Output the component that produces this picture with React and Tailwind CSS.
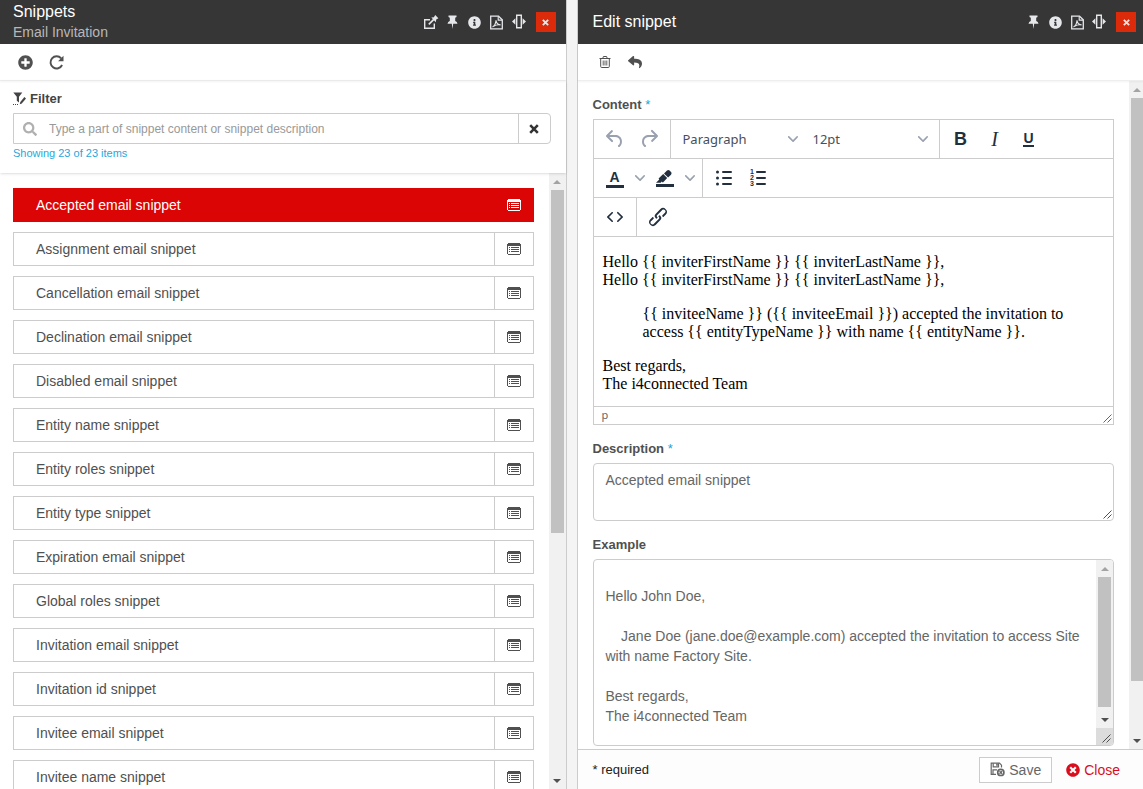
import React, { useState } from "react";
import {
  FaInfoCircle,
  FaPlusCircle,
  FaReply,
  FaSearch,
  FaTimesCircle,
} from "react-icons/fa";

const snippets = [
  "Accepted email snippet",
  "Assignment email snippet",
  "Cancellation email snippet",
  "Declination email snippet",
  "Disabled email snippet",
  "Entity name snippet",
  "Entity roles snippet",
  "Entity type snippet",
  "Expiration email snippet",
  "Global roles snippet",
  "Invitation email snippet",
  "Invitation id snippet",
  "Invitee email snippet",
  "Invitee name snippet",
];

const exampleText = `
Hello John Doe,

    Jane Doe (jane.doe@example.com) accepted the invitation to access Site with name Factory Site.

Best regards,
The i4connected Team`;

const OpenIcon = () => (
  <svg width="16" height="16" viewBox="0 0 16 16" fill="none" stroke="currentColor">
    <path d="M7 5.7H1.7v8.6h9.6V9.5" strokeWidth="1.4" />
    <path d="M5.8 10.4l5-5" strokeWidth="1.6" />
    <path d="M8.3 3.6l2.6-.4 1.3-2.2 3.2 3.2-2.2 1.3-.4 2.8z" fill="currentColor" stroke="none" />
  </svg>
);

const PinIcon = () => (
  <svg width="11" height="14" viewBox="0 0 11 14" fill="currentColor">
    <path d="M1.5.5h8v1.6L8.2 2.8v3.1q2 .8 2.3 2.8H6.2L5.5 14l-.7-5.3H.5q.3-2 2.3-2.8V2.8L1.5 2.1z" />
  </svg>
);

const PdfIcon = () => (
  <svg width="13" height="15" viewBox="0 0 13 15" fill="none" stroke="currentColor">
    <path d="M.7 1.2h7.8l3.8 3.6v9H.7z" strokeWidth="1.3" />
    <path d="M8.2 1.4v3.7h4" strokeWidth="1.1" />
    <path d="M2.5 12c2-1 3.3-3.8 3.5-6.7.4 2.8 1.8 4.3 4.6 4.6-2.6-.4-5 .1-7 1.4" strokeWidth="1.1" />
  </svg>
);

const WidthIcon = () => (
  <svg width="14" height="16" viewBox="0 0 14 16" fill="currentColor">
    <path d="M4.7 1.2h4.6v12.6H4.7z" fill="none" stroke="currentColor" strokeWidth="1.4" />
    <path d="M3.4 4.2v6.6L0 7.5zM10.6 4.2v6.6L14 7.5z" />
  </svg>
);

const CrossIcon = ({ size }) => (
  <svg width={size} height={size} viewBox="0 0 10 10" fill="none" stroke="currentColor" strokeWidth="2.6">
    <path d="M1.2 1.2l7.6 7.6M8.8 1.2L1.2 8.8" />
  </svg>
);

const RefreshIcon = () => (
  <svg width="15" height="15" viewBox="0 0 15 15" fill="none" stroke="currentColor">
    <path d="M12.2 3.3A6.1 6.1 0 1 0 13.1 10" strokeWidth="1.9" />
    <path d="M14.5.8v5.4H9.1z" fill="currentColor" stroke="none" />
  </svg>
);

const TrashIcon = () => (
  <svg width="14" height="14" viewBox="0 0 14 14" fill="none" stroke="currentColor">
    <path d="M1.5 3.5h11M4.8 3.3l.6-1.8h3.2l.6 1.8M2.7 3.7v7.8q0 1 1 1h6.6q1 0 1-1V3.7" />
    <path d="M5.2 5.5v5M7 5.5v5M8.8 5.5v5" strokeWidth=".9" />
  </svg>
);

const FilterIcon = () => (
  <svg width="13" height="14" viewBox="0 0 13 14" fill="currentColor">
    <path d="M.3.5h9L6 4.8v5.6L3.8 8.8v-4z" />
    <path d="M11.4 5l1.6 1.4-4.2 5-2 .8.5-2.1z" />
    <path d="M0 12.5h5" stroke="currentColor" strokeDasharray="1 1" />
  </svg>
);

const ListAltIcon = () => (
  <svg width="14" height="12" viewBox="0 0 14 12" fill="currentColor" shapeRendering="crispEdges">
    <path d="M0 1h1V0h12v1h1v10h-1v1H1v-1H0zM1 3v8h12V3z" fillRule="evenodd" />
    <path d="M2 4h1v1H2zM4 4h8v1H4zM2 6h1v1H2zM4 6h8v1H4zM2 8h1v1H2zM4 8h8v1H4z" />
  </svg>
);

const SaveIcon = () => (
  <svg width="15" height="15" viewBox="0 0 15 15" fill="none" stroke="currentColor">
    <path d="M6 12.3H1.2V1.2h8.3l2 2v2.3" strokeWidth="1.2" />
    <path d="M3.2 1.2v3.6h5.3V1.2M3 12V7.8h4" strokeWidth="1.2" />
    <path d="M6.2 1.4h1.6v2.4H6.2z" fill="currentColor" stroke="none" />
    <circle cx="10.8" cy="10.4" r="3.1" strokeWidth="1.7" />
    <path d="M9.5 9.1l2.6 2.6M12.1 9.1l-2.6 2.6" strokeWidth="1.3" />
  </svg>
);

const Grip = ({ className }) => (
  <svg width="9" height="9" viewBox="0 0 9 9" fill="none" stroke="currentColor" className={className}>
    <path d="M.5 8.5l8-8M4.5 8.5l4-4" />
  </svg>
);

const Chevron = () => (
  <svg width="10" height="10" viewBox="0 0 10 10" fill="currentColor">
    <path d="M8.7 2.2c.3-.3.8-.3 1 0 .4.4.4.9 0 1.2L5.7 7.8c-.3.3-.9.3-1.2 0L.2 3.4a.8.8 0 0 1 0-1.2c.3-.3.8-.3 1.1 0L5 6l3.7-3.8Z" />
  </svg>
);

const EditorIcon = ({ d }) => (
  <svg width="24" height="24" viewBox="0 0 24 24" fill="currentColor">
    <path d={d} />
  </svg>
);

const undoPath =
  "M6.4 8H12c3.7 0 6.2 2 6.8 5.1.6 2.7-.4 5.6-2.3 6.8a1 1 0 0 1-1-1.8c1.1-.6 1.8-2.7 1.4-4.6-.5-2.1-2.1-3.5-4.9-3.5H6.4l3.3 3.3a1 1 0 1 1-1.4 1.4l-5-5a1 1 0 0 1 0-1.4l5-5a1 1 0 0 1 1.4 1.4L6.4 8Z";
const redoPath =
  "M17.6 10H12c-2.8 0-4.4 1.4-4.9 3.5-.4 2 .3 4 1.4 4.6a1 1 0 1 1-1 1.8c-2-1.2-2.9-4.1-2.3-6.8.6-3 3-5.1 6.8-5.1h5.6l-3.3-3.3a1 1 0 1 1 1.4-1.4l5 5a1 1 0 0 1 0 1.4l-5 5a1 1 0 0 1-1.4-1.4l3.3-3.3Z";
const highlightPath =
  "M3 18h18v3H3zM7.7 16.7H3l3.3-3.3-.7-.8L10.2 8l4 4.1-4 4.2c-.2.2-.6.2-.8 0l-.6-.7-1.1 1.1zm5-7.5L11 7.4l3-2.9a2 2 0 0 1 2.6 0L18 6c.7.7.7 2 0 2.7l-2.9 2.9-1.8-1.8-.5-.6";
const codePath =
  "M9.8 15.7c.3.3.3.8 0 1-.3.4-.9.4-1.2 0l-4.4-4.1a.8.8 0 0 1 0-1.2l4.4-4.2c.3-.3.9-.3 1.2 0 .3.3.3.8 0 1.1L6 12l3.8 3.7ZM14.2 15.7c-.3.3-.3.8 0 1 .4.4.9.4 1.2 0l4.4-4.1c.3-.3.3-.9 0-1.2l-4.4-4.2a.8.8 0 0 0-1.2 0c-.3.3-.3.8 0 1.1L18 12l-3.8 3.7Z";
const linkPath =
  "M6.2 12.3a1 1 0 0 1 1.4 1.4l-2 2a2 2 0 1 0 2.6 2.8l4.8-4.8a1 1 0 0 0 0-1.4 1 1 0 1 1 1.4-1.3 2.9 2.9 0 0 1 0 4L9.6 20a3.9 3.9 0 0 1-5.5-5.5l2-2Zm11.6-.6a1 1 0 0 1-1.4-1.4l2-2a2 2 0 1 0-2.6-2.8L11 10.3a1 1 0 0 0 0 1.4A1 1 0 1 1 9.6 13a2.9 2.9 0 0 1 0-4L14.4 4a3.9 3.9 0 0 1 5.5 5.5l-2 2Z";

const BulletListIcon = () => (
  <svg width="24" height="24" viewBox="0 0 24 24" fill="currentColor">
    <circle cx="5.5" cy="6" r="1.5" />
    <circle cx="5.5" cy="12" r="1.5" />
    <circle cx="5.5" cy="18" r="1.5" />
    <path d="M11 6h8M11 12h8M11 18h8" stroke="currentColor" strokeWidth="2" strokeLinecap="round" />
  </svg>
);

const NumberListIcon = () => (
  <svg width="24" height="24" viewBox="0 0 24 24" fill="currentColor">
    <text x="4" y="8" className="font-bold text-[7px]">1</text>
    <text x="4" y="14" className="font-bold text-[7px]">2</text>
    <text x="4" y="20" className="font-bold text-[7px]">3</text>
    <path d="M11 6h8M11 12h8M11 18h8" stroke="currentColor" strokeWidth="2" strokeLinecap="round" />
  </svg>
);

const HeaderButton = ({ label, children }) => (
  <button type="button" aria-label={label} className="flex w-[22px] justify-center text-gray-200">
    {children}
  </button>
);

const PanelHeader = ({ title, subtitle, className, canOpen }) => (
  <header className={`flex h-11 shrink-0 items-center justify-between bg-[#363636] ${className}`}>
    <div>
      <h1 className="text-base leading-5 text-white">{title}</h1>
      {subtitle && <p className="text-sm leading-5 text-[#b8b8b8]">{subtitle}</p>}
    </div>
    <div className="flex items-center">
      {canOpen && (
        <HeaderButton label="Open">
          <OpenIcon />
        </HeaderButton>
      )}
      <HeaderButton label="Pin">
        <PinIcon />
      </HeaderButton>
      <HeaderButton label="Info">
        <FaInfoCircle size={13} />
      </HeaderButton>
      <HeaderButton label="Export to PDF">
        <PdfIcon />
      </HeaderButton>
      <HeaderButton label="Resize">
        <WidthIcon />
      </HeaderButton>
      <button
        type="button"
        aria-label="Close panel"
        className="ml-1.5 flex size-5 items-center justify-center bg-[#dc2b0b] text-gray-200"
      >
        <CrossIcon size={7} />
      </button>
    </div>
  </header>
);

const ToolbarButton = ({ label, disabled, className = "w-[34px]", children }) => (
  <button
    type="button"
    aria-label={label}
    disabled={disabled}
    className={`flex h-[34px] items-center justify-center text-[#222f3e] disabled:text-gray-400 ${className}`}
  >
    {children}
  </button>
);

const Scrollbar = ({ className = "w-[17px] px-0.5", thumb }) => (
  <div aria-hidden="true" className={`flex shrink-0 flex-col bg-[#f1f1f1] ${className}`}>
    <div className="flex h-[17px] shrink-0 items-center justify-center">
      <span className="border-x-4 border-b-4 border-x-transparent border-b-[#a3a3a3]" />
    </div>
    <div className="min-h-0 flex-1">
      <div className={`bg-[#c1c1c1] ${thumb}`} />
    </div>
    <div className="flex h-[17px] shrink-0 items-center justify-center">
      <span className="border-x-4 border-t-4 border-x-transparent border-t-[#505050]" />
    </div>
  </div>
);

const SnippetsPanel = () => {
  const [selected, setSelected] = useState(0);
  const [filter, setFilter] = useState("");

  return (
    <section className="flex min-w-0 flex-1 flex-col bg-white">
      <PanelHeader title="Snippets" subtitle="Email Invitation" className="pr-2.5 pl-[13px]" canOpen />
      <div className="flex h-[37px] shrink-0 items-center gap-4 border-b border-[#eee] px-[18px] text-[#505050] shadow-xs">
        <button type="button" aria-label="Add snippet">
          <FaPlusCircle size={15} />
        </button>
        <button type="button" aria-label="Refresh">
          <RefreshIcon />
        </button>
      </div>
      <div className="z-10 shrink-0 px-[13px] pt-2 pb-3 shadow">
        <label htmlFor="filter" className="flex items-center gap-1 text-[13px] leading-5 font-bold text-[#444]">
          <FilterIcon />
          Filter
        </label>
        <div className="mt-1 mr-0.5 flex h-[31px] rounded-r-sm border border-[#ccc]">
          <div className="flex flex-1 items-center gap-3 pl-[9px]">
            <FaSearch size={14} className="text-[#b0b0b0]" />
            <input
              id="filter"
              type="text"
              value={filter}
              onChange={(e) => setFilter(e.target.value)}
              placeholder="Type a part of snippet content or snippet description"
              className="flex-1 text-xs text-[#444] outline-none placeholder:text-[#999]"
            />
          </div>
          <button
            type="button"
            aria-label="Clear filter"
            onClick={() => setFilter("")}
            className="flex w-8 items-center justify-center border-l border-[#ccc] text-[#333]"
          >
            <CrossIcon size={10} />
          </button>
        </div>
        <p className="mt-px text-[11px] leading-4 font-medium text-[#1fa8dc]">Showing 23 of 23 items</p>
      </div>
      <div className="flex min-h-0 flex-1">
        <ul className="flex min-w-0 flex-1 flex-col gap-2.5 overflow-hidden pt-[15px] pr-[15px] pl-[13px]">
          {snippets.map((name, i) => (
            <li
              key={name}
              className={`flex h-[34px] shrink-0 border ${
                selected === i ? "border-[#dc0505] bg-[#dc0505] text-white" : "border-[#ccc] text-[#505050]"
              }`}
            >
              <button
                type="button"
                onClick={() => setSelected(i)}
                className={`flex-1 pl-[22px] text-left text-sm ${selected === i ? "font-medium" : ""}`}
              >
                {name}
              </button>
              <button
                type="button"
                aria-label={`Details of ${name}`}
                className={`flex w-[39px] items-center justify-center border-l ${
                  selected === i ? "border-[#dc0505]" : "border-[#ccc]"
                }`}
              >
                <ListAltIcon />
              </button>
            </li>
          ))}
        </ul>
        <Scrollbar thumb="h-[59%]" />
      </div>
    </section>
  );
};

const Editor = () => (
  <div className="border border-[#ccc]">
    <div className="flex h-[39px] border-b border-[#ccc]">
      <div className="flex items-center border-r border-[#ccc] px-1">
        <ToolbarButton label="Undo" disabled>
          <EditorIcon d={undoPath} />
        </ToolbarButton>
        <ToolbarButton label="Redo" disabled>
          <EditorIcon d={redoPath} />
        </ToolbarButton>
      </div>
      <div className="flex items-center border-r border-[#ccc] px-1 font-['Noto_Sans',sans-serif] text-[13px] text-[#46505c]">
        <div className="grid w-[130px] items-center">
          <select aria-label="Block format" className="col-start-1 row-start-1 h-9 appearance-none pt-0.5 pl-2">
            <option>Paragraph</option>
          </select>
          <span className="pointer-events-none col-start-1 row-start-1 mr-[7px] justify-self-end text-gray-400">
            <Chevron />
          </span>
        </div>
        <div className="grid w-[130px] items-center">
          <select aria-label="Font size" className="col-start-1 row-start-1 h-9 appearance-none pt-0.5 pl-2">
            <option>12pt</option>
          </select>
          <span className="pointer-events-none col-start-1 row-start-1 mr-[7px] justify-self-end text-gray-400">
            <Chevron />
          </span>
        </div>
      </div>
      <div className="flex items-center px-1">
        <ToolbarButton label="Bold">
          <span className="text-lg font-bold">B</span>
        </ToolbarButton>
        <ToolbarButton label="Italic">
          <span className="font-['Liberation_Serif',serif] text-xl italic">I</span>
        </ToolbarButton>
        <ToolbarButton label="Underline">
          <span className="border-b-2 text-sm leading-[13px] font-bold">U</span>
        </ToolbarButton>
      </div>
    </div>
    <div className="flex h-[39px] border-b border-[#ccc]">
      <div className="flex items-center border-r border-[#ccc] px-1">
        <ToolbarButton label="Text color">
          <span className="mt-0.5 w-[18px] border-b-3 text-sm leading-[15px] font-bold">A</span>
        </ToolbarButton>
        <ToolbarButton label="Text color options" className="w-4 text-gray-400">
          <Chevron />
        </ToolbarButton>
        <ToolbarButton label="Background color">
          <EditorIcon d={highlightPath} />
        </ToolbarButton>
        <ToolbarButton label="Background color options" className="w-4 text-gray-400">
          <Chevron />
        </ToolbarButton>
      </div>
      <div className="flex items-center px-1">
        <ToolbarButton label="Bullet list">
          <BulletListIcon />
        </ToolbarButton>
        <ToolbarButton label="Numbered list">
          <NumberListIcon />
        </ToolbarButton>
      </div>
    </div>
    <div className="flex h-[39px] border-b border-[#ccc]">
      <div className="flex items-center border-r border-[#ccc] px-1">
        <ToolbarButton label="Source code">
          <EditorIcon d={codePath} />
        </ToolbarButton>
      </div>
      <div className="flex items-center px-1">
        <ToolbarButton label="Insert link">
          <EditorIcon d={linkPath} />
        </ToolbarButton>
      </div>
    </div>
    <div
      role="textbox"
      aria-multiline="true"
      aria-labelledby="content-label"
      contentEditable
      suppressContentEditableWarning
      className="px-[9px] pt-4 pb-[13px] font-['Liberation_Serif',serif] text-base leading-[18px] text-black outline-none"
    >
      <p>
        {"Hello {{ inviterFirstName }} {{ inviterLastName }},"}
        <br />
        {"Hello {{ inviterFirstName }} {{ inviterLastName }},"}
      </p>
      <p className="my-4 px-10">
        {"{{ inviteeName }} ({{ inviteeEmail }}) accepted the invitation to access {{ entityTypeName }} with name {{ entityName }}."}
      </p>
      <p>
        Best regards,
        <br />
        The i4connected Team
      </p>
    </div>
    <div className="flex h-[18px] items-end justify-between border-t border-[#ccc] pr-px pb-px pl-2 text-[#666]">
      <span className="font-['Noto_Sans',sans-serif] text-[11px] leading-4">p</span>
      <Grip />
    </div>
  </div>
);

const EditPanel = () => {
  const [description, setDescription] = useState("Accepted email snippet");

  return (
    <section className="flex min-w-0 flex-1 flex-col bg-white">
      <PanelHeader title="Edit snippet" className="pr-[7px] pl-[15px]" />
      <div className="z-10 flex h-[37px] shrink-0 items-center gap-4 border-b border-[#eee] px-5 text-[#505050] shadow-xs">
        <button type="button" aria-label="Delete">
          <TrashIcon />
        </button>
        <button type="button" aria-label="Revert">
          <FaReply size={14} />
        </button>
      </div>
      <div className="flex min-h-0 flex-1">
        <form id="snippet-form" className="min-w-0 flex-1 overflow-hidden px-[15px] pt-3.5">
          <div id="content-label" className="mb-1 text-[13px] leading-5 font-bold text-[#505050]">
            Content <span className="font-normal text-[#2a9fd0]">*</span>
          </div>
          <Editor />
          <label htmlFor="description" className="mt-3.5 mb-1 block text-[13px] leading-5 font-bold text-[#505050]">
            Description <span className="font-normal text-[#2a9fd0]">*</span>
          </label>
          <div className="grid">
            <textarea
              id="description"
              value={description}
              onChange={(e) => setDescription(e.target.value)}
              className="col-start-1 row-start-1 h-[58px] resize-none rounded border border-[#ccc] px-3 py-1.5 text-sm leading-5 text-[#666]"
            />
            <Grip className="pointer-events-none col-start-1 row-start-1 mr-0.5 mb-0.5 self-end justify-self-end text-[#505050]" />
          </div>
          <label htmlFor="example" className="mt-3.5 mb-1 block text-[13px] leading-5 font-bold text-[#505050]">
            Example
          </label>
          <div className="flex h-[187px] overflow-hidden rounded border border-[#ccc]">
            <textarea
              id="example"
              readOnly
              value={exampleText}
              className="min-w-0 flex-1 resize-none overflow-hidden px-3 py-1.5 text-sm leading-5 text-[#666]"
            />
            <div className="flex flex-col">
              <Scrollbar className="min-h-0 w-[17px] flex-1 px-0.5" thumb="h-[97%]" />
              <div className="flex h-[17px] items-end justify-end bg-[#dcdcdc] p-0.5 text-[#505050]">
                <Grip />
              </div>
            </div>
          </div>
        </form>
        <Scrollbar className="w-3.5 pl-0.5" thumb="h-[92%]" />
      </div>
      <footer className="flex h-10 shrink-0 items-center justify-between border-t border-[#ccc] bg-[#fdfdfd] pr-[23px] pl-[15px]">
        <span className="text-[13px] text-[#222]">* required</span>
        <div className="flex items-center gap-3.5 text-sm">
          <button
            type="submit"
            form="snippet-form"
            className="flex h-[26px] items-center gap-1 border border-[#ccc] bg-white px-2.5 text-[#666]"
          >
            <SaveIcon />
            Save
          </button>
          <button type="button" className="flex items-center gap-1 text-[#d90d1e]">
            <FaTimesCircle size={14} />
            Close
          </button>
        </div>
      </footer>
    </section>
  );
};

const App = () => {
  return (
    <main className="flex h-screen overflow-hidden bg-[#f4f4f4] font-['Liberation_Sans',Arial,sans-serif]">
      <SnippetsPanel />
      <div className="w-3 shrink-0 border-x border-[#ccc]" />
      <EditPanel />
    </main>
  );
};

export default App;
